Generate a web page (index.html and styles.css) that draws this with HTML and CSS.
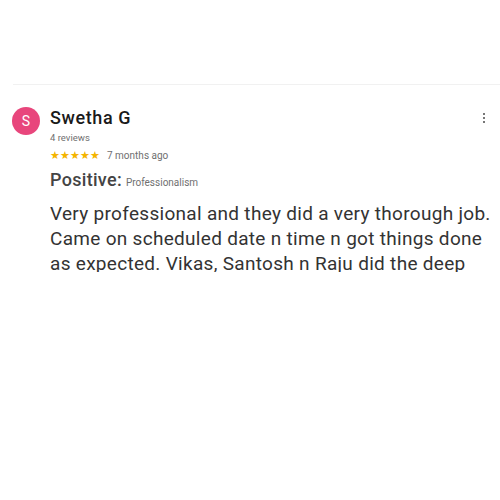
FILE: index.html
```html
<!DOCTYPE html>
<html lang="en">
<head>
    <meta charset="UTF-8">
    <title>Review - Swetha G</title>
    <link rel="stylesheet" href="styles.css">
</head>
<body>
    <div class="divisor"></div>

    <div class="resena">
        <div class="avatar">S</div>
        <div class="contenido">
            <div class="cabecera">
                <div class="nombre">Swetha G</div>
                <div class="menu-puntos"><span></span><span></span><span></span></div>
            </div>
            <div class="conteo">4 reviews</div>
            <div class="valoracion">
                <span class="estrellas">★★★★★</span>
                <span class="fecha">7 months ago</span>
            </div>
            <div class="aspecto">
                <span class="aspecto-titulo">Positive:</span>
                <span class="aspecto-valor">Professionalism</span>
            </div>
            <p class="texto">Very professional and they did a very thorough job. Came on scheduled date n time n got things done as expected. Vikas, Santosh n Raju did the deep cleaning of the whole house and were very careful with everything.</p>
        </div>
    </div>
</body>
</html>
```

FILE: styles.css
```css
:root {
    --texto: #2a2a2a;
    --gris: #6f6f6f;
    --rosa: #e8467c;
    --dorado: #f4b400;
    --linea: #f1f1f1;
}

body {
    font-family: Roboto, "Liberation Sans", sans-serif;
    background-color: #fff;
    margin: 0;
    color: var(--texto);
}

.divisor {
    height: 1px;
    background-color: var(--linea);
    margin: 84px 0 0 13px;
}

.resena {
    display: flex;
    gap: 10px;
    padding: 22px 0 0 12px;
}

.avatar {
    flex: none;
    width: 28px;
    height: 28px;
    border-radius: 50%;
    background-color: var(--rosa);
    color: #fff;
    font-size: 14px;
    line-height: 28px;
    text-align: center;
}

.contenido {
    flex: 1;
    min-width: 0;
}

.cabecera {
    display: flex;
    justify-content: space-between;
    align-items: flex-start;
}

.nombre {
    font-size: 18px;
    font-weight: 500;
    line-height: 22px;
    letter-spacing: 0.6px;
    color: #1a1a1a;
}

.menu-puntos {
    display: flex;
    flex-direction: column;
    gap: 2px;
    margin: 6px 15px 0 0;
}

    .menu-puntos span {
        width: 2px;
        height: 2px;
        background-color: #777;
    }

.conteo {
    font-size: 9.5px;
    color: var(--gris);
    margin-top: 3px;
}

.valoracion {
    display: flex;
    align-items: center;
    gap: 7px;
    margin-top: 6px;
}

.estrellas {
    color: var(--dorado);
    font-size: 11px;
}

.fecha {
    font-size: 10px;
    color: var(--gris);
}

.aspecto {
    margin-top: 7px;
}

.aspecto-titulo {
    font-size: 18px;
    font-weight: 500;
    letter-spacing: 0.3px;
    color: #444;
}

.aspecto-valor {
    font-size: 10px;
    color: var(--gris);
}

.texto {
    font-size: 19px;
    line-height: 25px;
    letter-spacing: 0.3px;
    color: #333;
    margin: 11px 0 0;
    padding-right: 4px;
    height: 71px;
    overflow: hidden;
}
```
